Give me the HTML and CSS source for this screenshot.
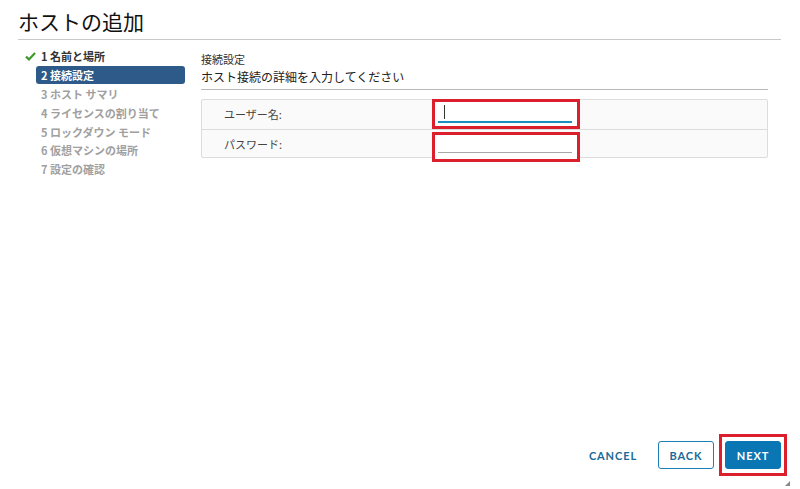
FILE: index.html
```html
<!DOCTYPE html>
<html lang="ja">
<head>
<meta charset="utf-8">
<title>ホストの追加</title>
<link rel="stylesheet" href="styles.css">
</head>
<body>
<div class="dialog">
  <header class="dlg-header">
    <h1 class="dlg-title">ホストの追加</h1>
  </header>
  <div class="dlg-body">
    <nav class="steps">
      <div class="step done">
        <svg class="check" width="11" height="9" viewBox="0 0 11 9"><path d="M1 4.6 L4 7.4 L10 1" fill="none" stroke="#3f9a2c" stroke-width="2.2"/></svg>
        <span>1 名前と場所</span>
      </div>
      <div class="step active">2 接続設定</div>
      <div class="step">3 ホスト サマリ</div>
      <div class="step">4 ライセンスの割り当て</div>
      <div class="step">5 ロックダウン モード</div>
      <div class="step">6 仮想マシンの場所</div>
      <div class="step">7 設定の確認</div>
    </nav>
    <main class="content">
      <div class="sec-title">接続設定</div>
      <div class="sec-sub">ホスト接続の詳細を入力してください</div>
      <div class="form-table">
        <div class="row">
          <div class="label">ユーザー名:</div>
          <div class="mark">
            <div class="field active"><span class="caret"></span></div>
          </div>
        </div>
        <div class="row">
          <div class="label">パスワード:</div>
          <div class="mark low">
            <div class="field"></div>
          </div>
        </div>
      </div>
    </main>
  </div>
  <footer class="dlg-footer">
    <button class="btn link">CANCEL</button>
    <button class="btn outline">BACK</button>
    <div class="btn-mark"><button class="btn primary">NEXT</button></div>
  </footer>
  <div class="resize"></div>
</div>
</body>
</html>
```
FILE: styles.css
```css
* { box-sizing: border-box; }
html, body { margin: 0; padding: 0; background: #fff; }
body {
  font-family: "Noto Sans CJK JP", "Noto Sans", sans-serif;
  color: #333;
  width: 800px;
  height: 489px;
  overflow: hidden;
}
.dialog {
  position: relative;
  height: 489px;
  display: flex;
  flex-direction: column;
}
.dlg-header {
  margin: 0 19px 0 18px;
  border-bottom: 1px solid #c8c8c8;
  height: 40px;
  display: flex;
  align-items: flex-end;
}
.dlg-title {
  margin: 0 0 3px 0;
  font-size: 21px;
  font-weight: 400;
  line-height: 30px;
  color: #111;
}
.dlg-body {
  flex: 1;
  display: flex;
  padding-top: 9px;
}
.steps {
  width: 149px;
  margin-left: 36px;
  margin-top: -2px;
  display: flex;
  flex-direction: column;
}
.step {
  height: 18.8px;
  line-height: 18px;
  font-size: 11px;
  font-weight: 700;
  color: #a0a0a0;
  padding-left: 5px;
  display: flex;
  align-items: center;
  white-space: nowrap;
}
.step.done { color: #333; }
.step .check { margin-left: -16px; margin-right: 5px; }
.step.active {
  background: #2d5a88;
  color: #fff;
  border-radius: 3px;
  height: 17.8px;
  margin-bottom: 1px;
}
.content {
  margin-left: 16px;
  width: 567px;
}
.sec-title {
  font-size: 11px;
  line-height: 18px;
  color: #333;
  padding-top: 1px;
}
.sec-sub {
  font-size: 12px;
  line-height: 17px;
  color: #222;
  padding-bottom: 4px;
  border-bottom: 1px solid #b8b8b8;
}
.form-table {
  margin-top: 9px;
  border: 1px solid #dcdcdc;
  border-radius: 2px;
  background: #fafafa;
}
.row {
  height: 29px;
  display: flex;
  align-items: flex-start;
}
.row + .row { border-top: 1px solid #dcdcdc; height: 28px; }
.label {
  width: 230px;
  padding-left: 22px;
  font-size: 11px;
  line-height: 28px;
  color: #444;
}
.mark {
  margin-top: -1px;
  width: 148px;
  height: 30px;
  border: 3px solid #dc1f2c;
  padding: 0 5px 0 3px;
  background: #fff;
  display: flex;
  align-items: flex-end;
}
.mark.low { margin-top: 2px; height: 30px; }
.field {
  width: 100%;
  height: 20px;
  border-bottom: 1px solid #a8a8a8;
  margin-bottom: 6px;
  position: relative;
}
.field.active {
  border-bottom: 2px solid #1d8fbf;
  margin-bottom: 3px;
}
.caret {
  position: absolute;
  left: 6px;
  top: 2px;
  width: 1px;
  height: 14px;
  background: #333;
}
.dlg-footer {
  display: flex;
  justify-content: flex-end;
  align-items: center;
  padding: 0 13px 13px 0;
}
.btn {
  font-family: "Lato", "Noto Sans", sans-serif;
  font-size: 11px;
  font-weight: 700;
  letter-spacing: 0.9px;
  height: 28px;
  width: 56px;
  border-radius: 3px;
  cursor: pointer;
  padding: 0;
}
.btn.link {
  background: none;
  border: none;
  color: #1b6a97;
  width: auto;
  margin-right: 21px;
}
.btn.outline {
  background: #fff;
  border: 1px solid #1b7fb3;
  color: #1b6a97;
  margin-right: 5px;
}
.btn-mark {
  border: 3px solid #dc1f2c;
  padding: 4px 3px;
}
.btn.primary {
  background: #0a76b4;
  border: 1px solid #0a76b4;
  color: #fff;
  display: block;
}
.resize {
  position: absolute;
  right: 10px;
  bottom: 3px;
  width: 0;
  height: 0;
  border-left: 5px solid transparent;
  border-bottom: 5px solid #8a8a8a;
}
```
